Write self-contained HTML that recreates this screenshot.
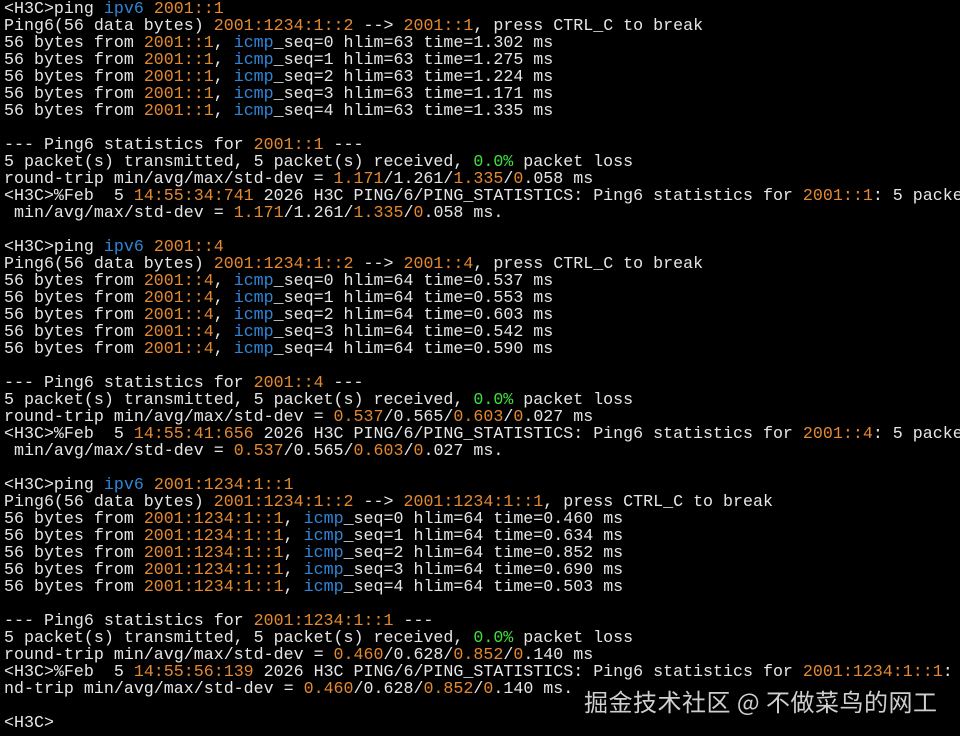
<!DOCTYPE html>
<html><head><meta charset="utf-8"><style>
html,body{margin:0;padding:0;background:#000;width:960px;height:736px;overflow:hidden}
pre{margin:0;padding:0 0 0 4px;font-family:"Liberation Mono","DejaVu Sans Mono",monospace;font-size:16.65px;line-height:17px;color:#e6e6e6;white-space:pre;position:relative;top:-0.5px}
.o{color:#e5892f}.b{color:#2f86d8}.g{color:#3ee03e}
.wm{position:absolute;left:584px;top:683px;font-family:"Noto Sans CJK SC",sans-serif;font-size:24px;color:#cfcfcf;letter-spacing:0.5px;text-shadow:0 0 2px #000}
</style></head><body>
<pre>&lt;H3C&gt;ping <span class="b">ipv6</span> <span class="o">2001::1</span>
Ping6(56 data bytes) <span class="o">2001:1234:1::2</span> --&gt; <span class="o">2001::1</span>, press CTRL_C to break
56 bytes from <span class="o">2001::1</span>, <span class="b">icmp</span>_seq=0 hlim=63 time=1.302 ms
56 bytes from <span class="o">2001::1</span>, <span class="b">icmp</span>_seq=1 hlim=63 time=1.275 ms
56 bytes from <span class="o">2001::1</span>, <span class="b">icmp</span>_seq=2 hlim=63 time=1.224 ms
56 bytes from <span class="o">2001::1</span>, <span class="b">icmp</span>_seq=3 hlim=63 time=1.171 ms
56 bytes from <span class="o">2001::1</span>, <span class="b">icmp</span>_seq=4 hlim=63 time=1.335 ms

--- Ping6 statistics for <span class="o">2001::1</span> ---
5 packet(s) transmitted, 5 packet(s) received, <span class="g">0.0%</span> packet loss
round-trip min/avg/max/std-dev = <span class="o">1.171</span>/1.261/<span class="o">1.335</span>/<span class="o">0</span>.058 ms
&lt;H3C&gt;%Feb  5 <span class="o">14:55:34:741</span> 2026 H3C PING/6/PING_STATISTICS: Ping6 statistics for <span class="o">2001::1</span>: 5 packe
 min/avg/max/std-dev = <span class="o">1.171</span>/1.261/<span class="o">1.335</span>/<span class="o">0</span>.058 ms.

&lt;H3C&gt;ping <span class="b">ipv6</span> <span class="o">2001::4</span>
Ping6(56 data bytes) <span class="o">2001:1234:1::2</span> --&gt; <span class="o">2001::4</span>, press CTRL_C to break
56 bytes from <span class="o">2001::4</span>, <span class="b">icmp</span>_seq=0 hlim=64 time=0.537 ms
56 bytes from <span class="o">2001::4</span>, <span class="b">icmp</span>_seq=1 hlim=64 time=0.553 ms
56 bytes from <span class="o">2001::4</span>, <span class="b">icmp</span>_seq=2 hlim=64 time=0.603 ms
56 bytes from <span class="o">2001::4</span>, <span class="b">icmp</span>_seq=3 hlim=64 time=0.542 ms
56 bytes from <span class="o">2001::4</span>, <span class="b">icmp</span>_seq=4 hlim=64 time=0.590 ms

--- Ping6 statistics for <span class="o">2001::4</span> ---
5 packet(s) transmitted, 5 packet(s) received, <span class="g">0.0%</span> packet loss
round-trip min/avg/max/std-dev = <span class="o">0.537</span>/0.565/<span class="o">0.603</span>/<span class="o">0</span>.027 ms
&lt;H3C&gt;%Feb  5 <span class="o">14:55:41:656</span> 2026 H3C PING/6/PING_STATISTICS: Ping6 statistics for <span class="o">2001::4</span>: 5 packe
 min/avg/max/std-dev = <span class="o">0.537</span>/0.565/<span class="o">0.603</span>/<span class="o">0</span>.027 ms.

&lt;H3C&gt;ping <span class="b">ipv6</span> <span class="o">2001:1234:1::1</span>
Ping6(56 data bytes) <span class="o">2001:1234:1::2</span> --&gt; <span class="o">2001:1234:1::1</span>, press CTRL_C to break
56 bytes from <span class="o">2001:1234:1::1</span>, <span class="b">icmp</span>_seq=0 hlim=64 time=0.460 ms
56 bytes from <span class="o">2001:1234:1::1</span>, <span class="b">icmp</span>_seq=1 hlim=64 time=0.634 ms
56 bytes from <span class="o">2001:1234:1::1</span>, <span class="b">icmp</span>_seq=2 hlim=64 time=0.852 ms
56 bytes from <span class="o">2001:1234:1::1</span>, <span class="b">icmp</span>_seq=3 hlim=64 time=0.690 ms
56 bytes from <span class="o">2001:1234:1::1</span>, <span class="b">icmp</span>_seq=4 hlim=64 time=0.503 ms

--- Ping6 statistics for <span class="o">2001:1234:1::1</span> ---
5 packet(s) transmitted, 5 packet(s) received, <span class="g">0.0%</span> packet loss
round-trip min/avg/max/std-dev = <span class="o">0.460</span>/0.628/<span class="o">0.852</span>/<span class="o">0</span>.140 ms
&lt;H3C&gt;%Feb  5 <span class="o">14:55:56:139</span> 2026 H3C PING/6/PING_STATISTICS: Ping6 statistics for <span class="o">2001:1234:1::1</span>:
nd-trip min/avg/max/std-dev = <span class="o">0.460</span>/0.628/<span class="o">0.852</span>/<span class="o">0</span>.140 ms.

&lt;H3C&gt;</pre>
<div class="wm">掘金技术社区 @ 不做菜鸟的网工</div>
</body></html>
